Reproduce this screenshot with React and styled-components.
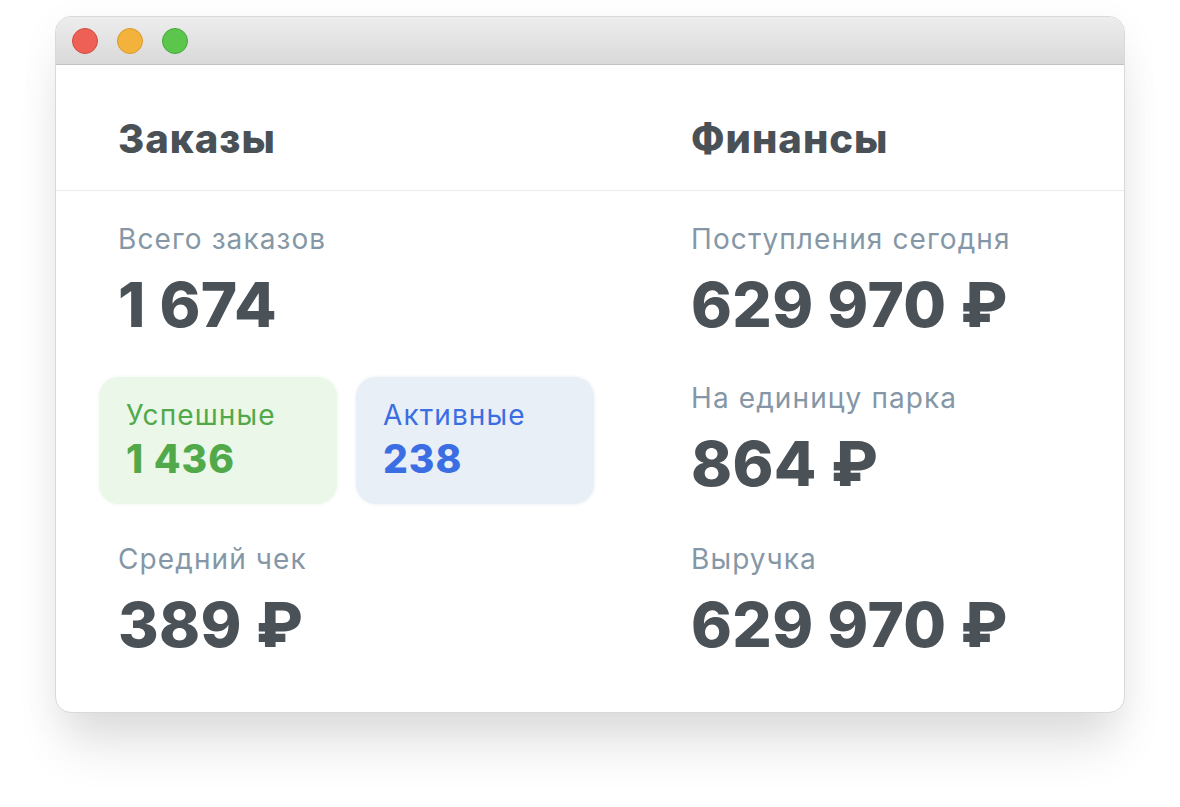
import React from 'react';
import styled, {createGlobalStyle} from 'styled-components';

const GlobalStyle = createGlobalStyle`
  body {
    margin: 0;
    background: #ffffff;
    font-family: Inter, "Liberation Sans", Arial, sans-serif;
  }
`;

const Page = styled.div`
  padding: 16px 55px 94px;
`;

const Window = styled.div`
  width: 1070px;
  box-sizing: border-box;
  border: 1px solid #d9d9d9;
  border-radius: 16px;
  background: #fff;
  overflow: hidden;
  box-shadow: 0 42px 50px -10px rgba(0, 0, 0, 0.11), 0 10px 40px rgba(0, 0, 0, 0.05);
`;

const TitleBar = styled.div`
  height: 47px;
  display: flex;
  align-items: center;
  gap: 19px;
  padding-left: 16px;
  background: linear-gradient(#ededed, #d9d9d9);
  border-bottom: 1px solid #c2c2c2;
`;

const Light = styled.span`
  width: 24px;
  height: 24px;
  border-radius: 50%;
  background: ${p => p.$fill};
  border: 1px solid ${p => p.$edge};
`;

const Header = styled.div`
  height: 126px;
  box-sizing: border-box;
  display: grid;
  grid-template-columns: 573px 1fr;
  align-items: center;
  padding: 22px 0 0 62px;
  border-bottom: 1px solid #ececec;
`;

const Title = styled.h2`
  margin: 0;
  font-size: 40px;
  line-height: 44px;
  font-weight: 800;
  letter-spacing: 1px;
  color: #495156;
`;

const Body = styled.div`
  display: grid;
  grid-template-columns: 573px 1fr;
  padding: 32px 0 55px 62px;
`;

const Column = styled.div`
  display: flex;
  flex-direction: column;
`;

const Label = styled.div`
  margin-top: ${p => p.$top || 0}px;
  font-size: 28px;
  line-height: 32px;
  letter-spacing: 1.1px;
  color: #8597a6;
`;

const Value = styled.div`
  margin-top: 18px;
  font-size: 62px;
  line-height: 64px;
  font-weight: 800;
  letter-spacing: 0.3px;
  color: #4a5257;
  white-space: nowrap;
`;

const Cards = styled.div`
  display: flex;
  gap: 19px;
  margin: 40px 0 0 -19px;
`;

const Card = styled.div`
  width: 238px;
  height: 127px;
  box-sizing: border-box;
  padding: 22px 27px;
  border-radius: 20px;
  background: ${p => p.$bg};
  color: ${p => p.$fg};
  box-shadow: 0 0 4px ${p => p.$bg};
`;

const CardLabel = styled.div`
  font-size: 28px;
  line-height: 32px;
  letter-spacing: 1.1px;
`;

const CardValue = styled.div`
  margin-top: 6px;
  font-size: 39px;
  line-height: 44px;
  font-weight: 800;
  letter-spacing: 1px;
`;

const lights = [
  ['#ee5f56', '#d24a41'],
  ['#f3b23b', '#d89a2b'],
  ['#5bc64b', '#42a838'],
];

export default function App() {
  return (
    <Page>
      <GlobalStyle/>
      <Window>
        <TitleBar>
          {lights.map(([fill, edge]) => <Light key={fill} $fill={fill} $edge={edge}/>)}
        </TitleBar>
        <Header>
          <Title>Заказы</Title>
          <Title>Финансы</Title>
        </Header>
        <Body>
          <Column>
            <Label>Всего заказов</Label>
            <Value>1 674</Value>
            <Cards>
              <Card $bg="#ebf7e9" $fg="#52a94a">
                <CardLabel>Успешные</CardLabel>
                <CardValue>1 436</CardValue>
              </Card>
              <Card $bg="#e9eff7" $fg="#3b6ee3">
                <CardLabel>Активные</CardLabel>
                <CardValue>238</CardValue>
              </Card>
            </Cards>
            <Label $top={39}>Средний чек</Label>
            <Value>389 ₽</Value>
          </Column>
          <Column>
            <Label>Поступления сегодня</Label>
            <Value>629 970 ₽</Value>
            <Label $top={45}>На единицу парка</Label>
            <Value>864 ₽</Value>
            <Label $top={47}>Выручка</Label>
            <Value>629 970 ₽</Value>
          </Column>
        </Body>
      </Window>
    </Page>
  );
}
